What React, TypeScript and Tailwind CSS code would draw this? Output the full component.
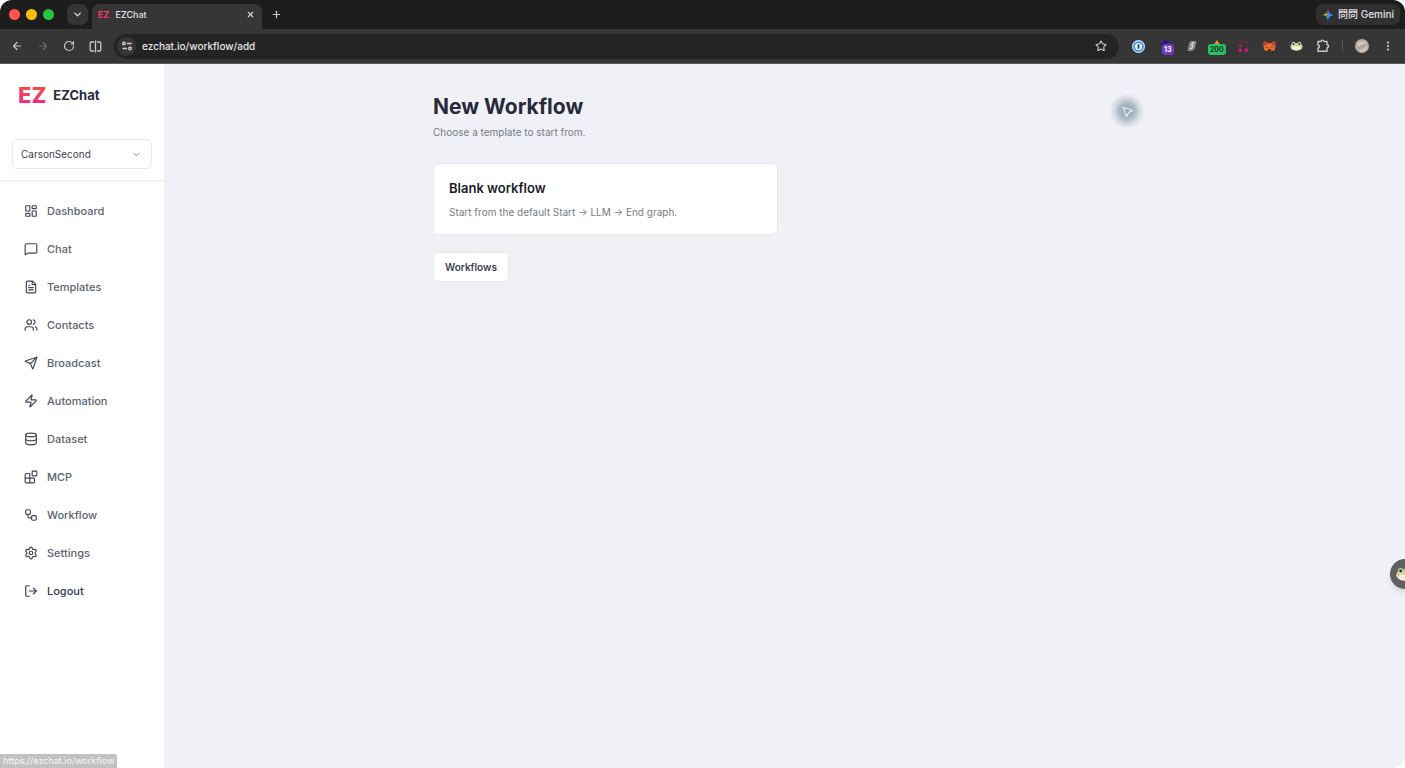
import { useState } from 'react';
import {
  ArrowLeft,
  ArrowRight,
  Blocks,
  ChevronDown,
  Database,
  EllipsisVertical,
  FileText,
  LayoutDashboard,
  LogOut,
  MessageSquare,
  Plus,
  RotateCw,
  Send,
  Settings,
  Star,
  Users,
  Workflow,
  X,
  Zap,
} from 'lucide-react';

const NAV_ITEMS = [
  { label: 'Dashboard', href: '/dashboard', icon: LayoutDashboard },
  { label: 'Chat', href: '/chat', icon: MessageSquare },
  { label: 'Templates', href: '/templates', icon: FileText },
  { label: 'Contacts', href: '/contacts', icon: Users },
  { label: 'Broadcast', href: '/broadcast', icon: Send },
  { label: 'Automation', href: '/automation', icon: Zap },
  { label: 'Dataset', href: '/dataset', icon: Database },
  { label: 'MCP', href: '/mcp', icon: Blocks },
  { label: 'Workflow', href: '/workflow', icon: Workflow },
  { label: 'Settings', href: '/settings', icon: Settings },
];

function Frog({ className }: { className?: string }) {
  return (
    <svg viewBox="0 0 16 12" className={className} aria-hidden="true">
      <ellipse cx="8" cy="7" rx="7.4" ry="4.8" fill="#f4f0da" />
      <path d="M.8 5.5C2 2.6 5 2.4 8 2.4s6 .2 7.2 3.1c-2 .9-4.6 1-7.2 1s-5.2-.1-7.2-1z" fill="#c6d39a" />
      <circle cx="4.3" cy="3.2" r="2.3" fill="#c6d39a" />
      <circle cx="11.7" cy="3.2" r="2.3" fill="#c6d39a" />
      <circle cx="4.3" cy="3.4" r="1.2" fill="#2f3327" />
      <circle cx="11.7" cy="3.4" r="1.2" fill="#2f3327" />
      <circle cx="2.3" cy="7.3" r="1" fill="#efa6a0" />
      <circle cx="13.7" cy="7.3" r="1" fill="#efa6a0" />
    </svg>
  );
}

function TabStrip() {
  return (
    <div className="flex h-[29px] bg-[#1d1d1e] pl-[9px] pr-[5px]">
      <div className="flex items-center gap-[6px]">
        <span className="size-[11px] rounded-full bg-[#fe5550]" />
        <span className="size-[11px] rounded-full bg-[#fdbc05]" />
        <span className="size-[11px] rounded-full bg-[#27c33f]" />
      </div>
      <button
        aria-label="Search tabs"
        className="ml-[13px] mt-1 flex size-[21px] items-center justify-center rounded-[7px] bg-[#353536] text-[#dededf]"
      >
        <ChevronDown className="size-[11px]" strokeWidth={3} />
      </button>
      <div className="ml-1 mt-1 flex w-[170px] items-center rounded-t-[8px] bg-[#363637] pb-1 pl-[6px] pr-[6px]">
        <span className="bg-gradient-to-b from-[#f8453f] to-[#ee2180] bg-clip-text text-[9px] font-extrabold leading-4 text-transparent">
          EZ
        </span>
        <span className="ml-[6px] flex-1 text-[9px] font-medium leading-4 text-[#e2e2e2]">EZChat</span>
        <button aria-label="Close tab" className="flex size-3 items-center justify-center text-[#d5d5d5]">
          <X className="size-[9px]" strokeWidth={3} />
        </button>
      </div>
      <button aria-label="New tab" className="ml-2 flex w-[13px] items-center justify-center text-[#c9c9c9]">
        <Plus className="size-[11px]" strokeWidth={2.6} />
      </button>
      <button className="ml-auto mt-1 flex h-[21px] items-center gap-1 rounded-[7px] bg-[#303031] px-[6px] text-[10px] font-medium text-[#e4e4e4]">
        <svg viewBox="0 0 12 12" className="size-3" aria-hidden="true">
          <path d="M6 .3C6.6 3.7 8.3 5.4 11.7 6L6 7z" fill="#4285f4" />
          <path d="M6 .3L6.5 4 4 5.5 3.8 4.6C5 3.7 5.7 2.3 6 .3z" fill="#e5523f" />
          <path d="M.3 6C2 5.7 3.3 5 4.2 4.2L6 6z" fill="#fbbc04" />
          <path d="M.3 6H6v5.7C5.4 8.3 3.7 6.6.3 6z" fill="#33a852" />
          <path d="M5.5 5L11.7 6C8.3 6.6 6.6 8.3 6 11.7L5 7z" fill="#4285f4" />
        </svg>
        問問 Gemini
      </button>
    </div>
  );
}

function Extensions() {
  return (
    <div className="flex items-center text-[#c9c9c9]">
      <button aria-label="Password manager" className="flex w-8 justify-center">
        <svg viewBox="0 0 14 14" className="size-[13px]" aria-hidden="true">
          <circle cx="7" cy="7" r="7" fill="#d4e7fb" />
          <circle cx="7" cy="7" r="5.7" fill="#3b8ce6" />
          <circle cx="7" cy="7" r="3.9" fill="#e8f2fd" />
          <rect x="6" y="4.5" width="2" height="5" rx=".6" fill="#23446d" />
        </svg>
      </button>
      <button className="relative flex w-[26px] justify-center">
        <svg viewBox="0 0 16 16" className="size-4" aria-hidden="true">
          <path d="M7 1l5.5 5.5L7 12 1.5 6.5z" fill="#4d27a0" />
          <path d="M7 1l3 3-5.5 5.5-3-3z" fill="#2f1578" />
        </svg>
        <span className="absolute left-2 top-[6px] rounded-[3px] bg-[#6a3cc0] px-[2px] text-[7px] font-bold leading-[11px] text-white">
          13
        </span>
      </button>
      <button aria-label="Shortcuts" className="flex w-6 justify-center">
        <svg viewBox="0 0 12 14" className="h-3 w-[10px]" aria-hidden="true">
          <path d="M4.500 1h5.500q1.500 0 1.200 1.400L9.200 10.500 6 13H1.500Q.5 13 .8 11.500L2.800 3z" fill="#8b8b8b" />
          <path d="M8.500 3.200C6 3 5.500 5 6.200 6.500S5.800 10.500 3.500 10" stroke="#f3f3f3" strokeWidth="1.3" fill="none" />
        </svg>
      </button>
      <button className="relative flex w-[26px] justify-center">
        <svg viewBox="0 0 16 16" className="size-4" aria-hidden="true">
          <path d="M8 2l3.500 5h-7z" fill="#ef8a23" />
        </svg>
        <span className="absolute left-1 top-[6px] rounded-[3px] bg-[#23c263] px-[2px] text-[7px] font-semibold leading-[11px] text-[#0f2417]">
          200
        </span>
      </button>
      <button aria-label="Recorder" className="flex w-[26px] justify-center">
        <svg viewBox="0 0 14 14" className="size-[13px]" aria-hidden="true">
          <circle cx="3.5" cy="6" r="1.8" fill="#b0195b" />
          <circle cx="3.5" cy="11" r="2" fill="#c01c66" />
          <circle cx="10" cy="11" r="2" fill="#c01c66" />
          <path d="M3 2h4.500c3 0 4 1.500 4 5" stroke="#8a1a4c" strokeWidth="1.6" strokeDasharray="2 .8" fill="none" />
        </svg>
      </button>
      <button aria-label="Wallet" className="flex w-[27px] justify-center">
        <svg viewBox="0 0 14 13" className="h-3 w-[13px]" aria-hidden="true">
          <path d="M1 .8l4.500 2.700h3L13 .8l.6 5-.9 5.200-3.200 1-1.500-1H6l-1.500 1-3.200-1L.4 5.800z" fill="#ef6a32" />
          <path d="M1 .8l3.500 2.700L3 6l-1.800.2zM13 .8L9.500 3.500 11 6l1.800.2z" fill="#b9461f" />
          <path d="M5.500 9.800h3l.2 1.500H5.300z" fill="#3a2a22" />
          <path d="M3.700 7.300l1.800.8-1.500.5zM10.300 7.300l-1.800.8 1.500.5z" fill="#2b2320" />
        </svg>
      </button>
      <button aria-label="Frog" className="flex w-[26px] justify-center">
        <Frog className="h-[10px] w-[13px]" />
      </button>
      <button aria-label="Extensions" className="flex w-7 justify-center">
        <svg viewBox="0 0 14 14" className="size-[14px]" fill="none" stroke="currentColor" strokeWidth="1.4" aria-hidden="true">
          <path
            d="M2 2.500h3c0-1.800 2.800-1.800 2.800 0h3.200v3.300c2.200 0 2.200 2.900 0 2.900v3.500H2V9c1.900 0 1.900-3 0-3z"
            strokeLinejoin="round"
          />
        </svg>
      </button>
      <span className="ml-[5px] h-3 w-px bg-[#555556]" />
      <button aria-label="Profile" className="ml-3">
        <svg viewBox="0 0 14 14" className="size-[14px]" aria-hidden="true">
          <circle cx="7" cy="7" r="7" fill="#b3aaa4" />
          <path d="M2 5c2-3 7-4 9-1L4 8zM4 11c3 0 6-2 8-5l.5 3c-2 3-5 4-7 4z" fill="#cfc8c3" />
          <path d="M4 8.500l6-3" stroke="#9a908a" strokeWidth=".8" />
        </svg>
      </button>
      <button aria-label="Menu" className="ml-[13px]">
        <EllipsisVertical className="size-3" strokeWidth={2.5} />
      </button>
    </div>
  );
}

function Toolbar() {
  const [url, setUrl] = useState('ezchat.io/workflow/add');

  return (
    <div className="flex h-[35px] items-center border-b border-[#5c5c5d] bg-[#363637] px-[11px]">
      <div className="flex items-center gap-[14px] text-[#c9c9c9]">
        <button aria-label="Back">
          <ArrowLeft className="size-3" strokeWidth={2.4} />
        </button>
        <button aria-label="Forward" className="text-[#6c6c6d]">
          <ArrowRight className="size-3" strokeWidth={2.4} />
        </button>
        <button aria-label="Reload">
          <RotateCw className="size-3" strokeWidth={2.4} />
        </button>
        <button aria-label="Split view">
          <svg viewBox="0 0 13 13" className="size-[13px]" fill="none" stroke="currentColor" strokeWidth="1.3" aria-hidden="true">
            <path d="M5 2H2.200Q1.200 2 1.200 3v7q0 1 1 1H5M8 2h2.800q1 0 1 1v7q0 1-1 1H8M6.500.5v12" />
          </svg>
        </button>
      </div>
      <div className="ml-3 mr-[3px] flex h-[25px] flex-1 items-center rounded-full bg-[#242425] pl-[3px] pr-3">
        <button
          aria-label="View site information"
          className="flex size-[19px] items-center justify-center rounded-full bg-[#363637] text-[#d5d5d5]"
        >
          <svg viewBox="0 0 12 12" className="size-3" fill="none" stroke="currentColor" strokeWidth="1.3" aria-hidden="true">
            <circle cx="3" cy="3.5" r="1.3" />
            <path d="M6 3.500h4.500M1.500 8.500H6" />
            <circle cx="9" cy="8.5" r="1.3" />
          </svg>
        </button>
        <input
          type="text"
          aria-label="Address"
          value={url}
          onChange={(e) => setUrl(e.target.value)}
          className="ml-[6px] min-w-0 flex-1 bg-transparent text-[10px] font-medium leading-4 text-[#e6e6e6] outline-none"
        />
        <button aria-label="Bookmark this tab" className="text-[#d0d0d0]">
          <Star className="size-3" strokeWidth={2.2} />
        </button>
      </div>
      <Extensions />
    </div>
  );
}

function Sidebar() {
  const [workspace, setWorkspace] = useState('CarsonSecond');

  return (
    <aside className="flex w-[164px] shrink-0 flex-col bg-white">
      <div className="border-b-2 border-[#f0f1f6] px-3 pb-[11px] pt-[19px]">
        <a href="/" className="flex h-6 items-center gap-[7px] pl-[6px]">
          <span className="bg-gradient-to-b from-[#f9502f] to-[#ee1c85] bg-clip-text text-[22px] font-extrabold leading-6 text-transparent">
            EZ
          </span>
          <span className="text-[13px] font-bold leading-6 text-[#262a3a]">EZChat</span>
        </a>
        <div className="relative mt-8">
          <select
            aria-label="Workspace"
            value={workspace}
            onChange={(e) => setWorkspace(e.target.value)}
            className="h-[30px] w-full appearance-none rounded-[5px] border border-[#e7e9ef] bg-white px-2 text-[10px] text-[#3d4251]"
          >
            <option>CarsonSecond</option>
          </select>
          <ChevronDown className="pointer-events-none absolute right-[10px] top-[10px] size-[11px] text-[#80838c]" />
        </div>
      </div>
      <nav className="flex flex-col pt-[10px] text-[11px] font-medium text-[#5d6370]">
        {NAV_ITEMS.map(({ label, href, icon: Icon }) => (
          <a key={label} href={href} className="flex h-[38px] items-center gap-[9px] pl-6">
            <Icon className="size-[14px] text-[#3f4554]" strokeWidth={2} />
            {label}
          </a>
        ))}
        <button className="flex h-[38px] items-center gap-[9px] pl-6 text-[#353a48]">
          <LogOut className="size-[14px]" strokeWidth={2} />
          Logout
        </button>
      </nav>
    </aside>
  );
}

export default function App() {
  return (
    <div className="bg-white font-['Inter','Noto_Sans_CJK_TC',sans-serif]">
      <div className="relative flex min-h-screen flex-col overflow-hidden rounded-t-[12px] rounded-br-[12px]">
        <header>
          <TabStrip />
          <Toolbar />
        </header>

        <div className="flex flex-1">
          <Sidebar />
          <main className="flex-1 bg-[#f0f1f6] px-6 pt-7">
            <div className="mx-auto max-w-[703px]">
              <h1 className="text-[21px] font-bold leading-[30px] text-[#272a39]">New Workflow</h1>
              <p className="mt-[2px] text-[10px] leading-4 text-[#767b88]">Choose a template to start from.</p>

              <div className="mt-[23px] grid grid-cols-2 gap-[14px]">
                <button className="rounded-[6px] border border-[#e6e8ee] bg-white px-[15px] py-[14px] text-left">
                  <span className="block text-[13px] font-semibold leading-5 text-[#191d27]">Blank workflow</span>
                  <span className="mt-[6px] block text-[10px] leading-4 text-[#767b88]">
                    Start from the default Start → LLM → End graph.
                  </span>
                </button>
              </div>

              <a
                href="/workflow"
                className="mt-[17px] inline-flex h-[30px] items-center rounded-[5px] border border-[#e6e8ee] bg-white px-[11px] text-[10px] font-semibold text-[#3b4050]"
              >
                Workflows
              </a>
            </div>
          </main>
        </div>

        {/* Pointer */}
        <div className="pointer-events-none absolute right-[260px] top-[93px] flex size-9 items-center justify-center bg-[radial-gradient(circle,#97a9b7_0%,#a9b7c4_30%,#d3dae3_50%,#f0f1f600_70%)]">
          <svg viewBox="0 0 12 12" className="size-3" aria-hidden="true">
            <path d="M2.500 2.500l9 3-4 1.900L5.600 11.500z" fill="#8fa2b1" stroke="#e4ebf2" strokeWidth="1.3" strokeLinejoin="round" />
          </svg>
        </div>

        {/* Floating frog button */}
        <button
          aria-label="Open assistant"
          className="absolute -right-[15px] top-[559px] flex size-[30px] items-center rounded-full bg-[#606062] pl-[5px] shadow-md"
        >
          <Frog className="h-[14px] w-5" />
        </button>

        {/* Link preview */}
        <div className="absolute bottom-0 left-0 rounded-tr-[3px] bg-[#c1c1c1] px-[3px] text-[9px] leading-[14px] text-[#f7f7f7]">
          https://ezchat.io/workflow
        </div>
      </div>
    </div>
  );
}
